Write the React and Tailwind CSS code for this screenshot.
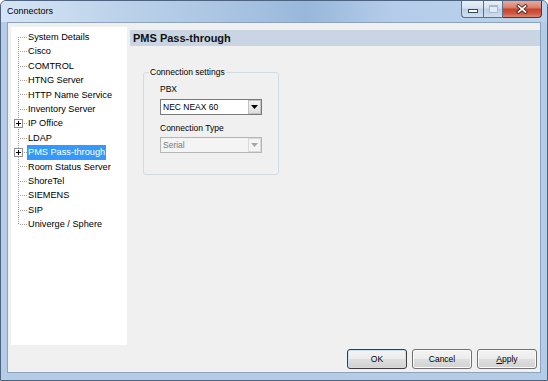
import React from "react";

const items = [
  "System Details",
  "Cisco",
  "COMTROL",
  "HTNG Server",
  "HTTP Name Service",
  "Inventory Server",
  "IP Office",
  "LDAP",
  "PMS Pass-through",
  "Room Status Server",
  "ShoreTel",
  "SIEMENS",
  "SIP",
  "Univerge / Sphere",
];
const expandable = [6, 8];
const selected = 8;
const ROW = 14.4;

function TreeLines() {
  const cys = items.map((_, i) => Math.floor(i * ROW + ROW / 2));
  return (
    <svg className="absolute left-0 top-0" width="17" height="203" viewBox="0 0 17 203">
      <line x1="7.5" y1={cys[0]} x2="7.5" y2={cys[cys.length - 1] + 1} stroke="#a0a0a0" strokeDasharray="1 1" />
      {cys.map((cy, i) => (
        <line key={"h" + i} x1="9" y1={cy + 0.5} x2="16" y2={cy + 0.5} stroke="#a0a0a0" strokeDasharray="1 1" />
      ))}
      {expandable.map((i) => {
        const cy = cys[i];
        return (
          <g key={"p" + i}>
            <rect x="3.5" y={cy - 3.5} width="8" height="8" fill="#ffffff" stroke="#919191" />
            <line x1="5" y1={cy + 0.5} x2="10" y2={cy + 0.5} stroke="#000" />
            <line x1="7.5" y1={cy - 2} x2="7.5" y2={cy + 3} stroke="#000" />
          </g>
        );
      })}
    </svg>
  );
}

function Arrow({ color }) {
  return (
    <svg width="7" height="4" viewBox="0 0 7 4">
      <path d="M0 0 H7 L3.5 4 Z" fill={color} />
    </svg>
  );
}

function Button({ children, def }) {
  return (
    <div
      className={
        "w-[60px] h-[20px] rounded-[3px] border flex items-center justify-center text-[8.5px] text-black bg-[linear-gradient(to_bottom,#f4f4f4_0%,#ececec_48%,#dedede_52%,#d1d1d1_100%)] " +
        (def ? "border-[#3d3d3d] shadow-[inset_0_0_0_1px_#c9dff2]" : "border-[#707070] shadow-[inset_0_0_0_1px_#fbfbfb]")
      }
    >
      {children}
    </div>
  );
}

export default function App() {
  return (
    <div className="w-[548px] h-[381px] flex flex-col border border-[#4d6380] rounded-t-[6px] bg-[#b5cce6] font-['Liberation_Sans',Arial,sans-serif] overflow-hidden">
      {/* Title bar */}
      <div className="h-[21px] flex items-start justify-between bg-[linear-gradient(to_right,#d6e5f5_0%,#bcd2ea_22%,#a3bfdf_48%,#98b7da_56%,#b5cdea_72%,#bcd2ec_100%)]">
        <div className="h-[21px] pl-[6px] flex items-center text-[9px] text-black">Connectors</div>
        <div className="flex mr-[5px]">
          <div className="w-[22px] h-[17px] border border-[#5a7090] border-t-0 border-r-0 rounded-bl-[4px] bg-[linear-gradient(to_bottom,#e9f0f8_0%,#d3e1f0_45%,#bccfe6_50%,#cfdff0_100%)] flex items-end justify-center pb-[4px]">
            <div className="w-[10px] h-[4px] bg-white border border-[#34495f]" />
          </div>
          <div className="w-[20px] h-[17px] border border-[#5a7090] border-t-0 bg-[linear-gradient(to_bottom,#e9f0f8_0%,#d3e1f0_45%,#bccfe6_50%,#cfdff0_100%)] flex items-center justify-center">
            <div className="w-[9px] h-[8px] border border-[#a9bad0] border-t-2 bg-[#e3ecf6]" />
          </div>
          <div className="w-[39px] h-[17px] border border-[#6a2b23] border-t-0 border-l-0 rounded-br-[4px] bg-[linear-gradient(to_bottom,#e9aa9c_0%,#d9826f_40%,#c7432b_52%,#cf5c45_80%,#dc8a72_100%)] flex items-center justify-center">
            <svg width="12" height="10" viewBox="0 0 12 10">
              <path d="M2.5 2 L9.5 8 M9.5 2 L2.5 8" stroke="#4b1710" strokeWidth="3.4" strokeLinecap="square" />
              <path d="M2.5 2 L9.5 8 M9.5 2 L2.5 8" stroke="#ffffff" strokeWidth="1.7" strokeLinecap="square" />
            </svg>
          </div>
        </div>
      </div>

      {/* Client area */}
      <div className="mx-[6px] mb-[7px] h-[351px] border border-[#8ca3c0] bg-[#f0f0f0] flex flex-col">
        <div className="flex pt-[4px] pl-[3px] h-[322px]">
          {/* Tree */}
          <div className="w-[116px] h-[318px] bg-white pt-[3px]">
            <div className="relative">
              <TreeLines />
              {items.map((t, i) => (
                <div key={t} className="h-[14.4px] pl-[16px] flex items-center">
                  <span
                    className={
                      "px-[1px] h-[14.4px] leading-[14.4px] text-[9.2px] whitespace-nowrap " +
                      (i === selected ? "bg-[#3399ff] text-white" : "text-black")
                    }
                  >
                    {t}
                  </span>
                </div>
              ))}
            </div>
          </div>

          {/* Right panel */}
          <div className="flex-1 ml-[3px] pt-[3px]">
            <div className="h-[16px] bg-[#c9d5e3] pl-[3px] flex items-center text-[11px] font-bold text-[#111]">
              PMS Pass-through
            </div>
            <fieldset className="ml-[13px] mt-[21px] w-[136px] h-[108px] border border-[#d3dbe2] rounded-[3px]">
              <legend className="ml-[5px] px-[1px] text-[8.5px] leading-[11px] text-black">Connection settings</legend>
              <div className="pl-[16px] pt-[6px]">
                <div className="text-[8.5px] leading-[11px] text-black">PBX</div>
                <div className="mt-[4px] w-[102px] h-[16px] bg-white border border-[#7a7a7a] flex items-center">
                  <span className="flex-1 pl-[2px] text-[8.5px] text-black whitespace-nowrap">NEC NEAX 60</span>
                  <div className="w-[13px] h-[14px] border border-[#c2c2c2] bg-[linear-gradient(to_bottom,#f2f2f2,#e0e0e0)] flex items-center justify-center">
                    <Arrow color="#000" />
                  </div>
                </div>
                <div className="mt-[8px] text-[8.5px] leading-[11px] text-black">Connection Type</div>
                <div className="mt-[3px] w-[102px] h-[16px] bg-[#f4f4f4] border border-[#b5b5b5] flex items-center">
                  <span className="flex-1 pl-[2px] text-[8.5px] text-[#7a7a7a] whitespace-nowrap">Serial</span>
                  <div className="w-[13px] h-[14px] border border-[#dadada] bg-[#f4f4f4] flex items-center justify-center">
                    <Arrow color="#a6a6a6" />
                  </div>
                </div>
              </div>
            </fieldset>
          </div>
        </div>

        {/* Buttons */}
        <div className="mt-[4px] h-[20px] pr-[3px] flex justify-end gap-[5px]">
          <Button def>OK</Button>
          <Button>Cancel</Button>
          <Button>
            <span>
              <span className="underline">A</span>pply
            </span>
          </Button>
        </div>
      </div>
    </div>
  );
}
